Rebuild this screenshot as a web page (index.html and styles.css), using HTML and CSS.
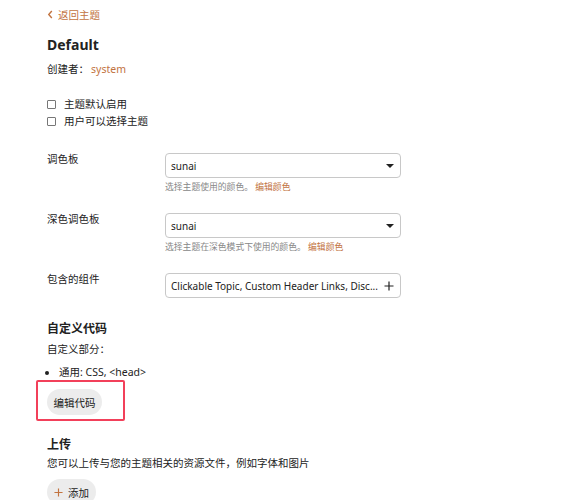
FILE: index.html
```html
<!DOCTYPE html>
<html lang="zh-CN">
<head>
    <meta charset="UTF-8">
    <meta name="viewport" content="width=device-width, initial-scale=1.0">
    <title>Default</title>
    <link rel="stylesheet" href="styles.css">
</head>
<body>
    <div class="page">
        <a class="back-link" href="#">
            <svg class="chevron" viewBox="0 0 8 10" width="7" height="9"><path d="M5.5 1 L2 5 L5.5 9" fill="none" stroke="currentColor" stroke-width="1.6"/></svg>
            返回主题
        </a>

        <h2 class="theme-title">Default</h2>
        <div class="author">创建者：<a href="#" class="link">system</a></div>

        <div class="checks">
            <label class="check"><span class="box"></span>主题默认启用</label>
            <label class="check"><span class="box"></span>用户可以选择主题</label>
        </div>

        <div class="setting">
            <div class="setting-label">调色板</div>
            <div class="setting-value">
                <div class="select">
                    <span>sunai</span>
                    <span class="caret"></span>
                </div>
                <div class="help">选择主题使用的颜色。 <a href="#" class="link">编辑颜色</a></div>
            </div>
        </div>

        <div class="setting">
            <div class="setting-label">深色调色板</div>
            <div class="setting-value">
                <div class="select">
                    <span>sunai</span>
                    <span class="caret"></span>
                </div>
                <div class="help">选择主题在深色模式下使用的颜色。 <a href="#" class="link">编辑颜色</a></div>
            </div>
        </div>

        <div class="setting">
            <div class="setting-label">包含的组件</div>
            <div class="setting-value">
                <div class="select">
                    <span class="ellipsis">Clickable Topic, Custom Header Links, Disc...</span>
                    <svg class="plus" viewBox="0 0 10 10" width="10" height="10"><path d="M5 0.5 V9.5 M0.5 5 H9.5" stroke="currentColor" stroke-width="1.2"/></svg>
                </div>
            </div>
        </div>

        <h3 class="section-title">自定义代码</h3>
        <div class="text">自定义部分：</div>
        <ul class="sections">
            <li>通用: CSS, &lt;head&gt;</li>
        </ul>
        <div class="highlight">
            <button class="btn">编辑代码</button>
        </div>

        <h3 class="section-title upload-title">上传</h3>
        <div class="text upload-text">您可以上传与您的主题相关的资源文件，例如字体和图片</div>
        <button class="btn btn-add">
            <svg class="plus accent" viewBox="0 0 10 10" width="9" height="9"><path d="M5 0.5 V9.5 M0.5 5 H9.5" stroke="currentColor" stroke-width="1.3"/></svg>
            添加
        </button>
    </div>
</body>
</html>
```

FILE: styles.css
```css
body {
    margin: 0;
    background-color: white;
    color: #222;
    font-family: "Noto Sans", "Noto Sans CJK SC", sans-serif;
    font-size: 10.5px;
}

.page {
    padding: 6px 0 0 47px;
}

.link {
    color: #c2733f;
    text-decoration: none;
}

.back-link {
    display: flex;
    align-items: center;
    gap: 4px;
    color: #c2733f;
    text-decoration: none;
    height: 17px;
}

.theme-title {
    font-size: 14px;
    font-weight: 700;
    margin: 12px 0 0;
    line-height: 20px;
}

.author {
    margin-top: 7px;
    line-height: 15px;
}

.author .link {
    margin-left: 2px;
}

.checks {
    margin-top: 19px;
}

.check {
    display: flex;
    align-items: center;
    height: 17px;
    line-height: 17px;
}

.box {
    width: 7px;
    height: 7px;
    border: 1px solid #777;
    border-radius: 1px;
    margin-right: 8px;
}

.setting {
    display: flex;
    margin-top: 23px;
}

.setting + .setting {
    margin-top: 20px;
}

.setting-label {
    width: 118px;
    line-height: 12px;
}

.setting-value {
    width: 236px;
}

.select {
    display: flex;
    align-items: center;
    justify-content: space-between;
    height: 25px;
    box-sizing: border-box;
    border: 1px solid #c8c8c8;
    border-radius: 4px;
    padding: 0 6px 0 5px;
    font-size: 10px;
    color: #222;
}

.ellipsis {
    white-space: nowrap;
    overflow: hidden;
    margin-right: 5px;
}

.caret {
    width: 0;
    height: 0;
    border-left: 4px solid transparent;
    border-right: 4px solid transparent;
    border-top: 4px solid #222;
}

.plus {
    flex-shrink: 0;
}

.help {
    font-size: 8.8px;
    color: #888;
    margin-top: 2px;
}

.section-title {
    font-size: 12px;
    font-weight: 700;
    margin: 23px 0 0;
    line-height: 16px;
}

.text {
    margin-top: 5px;
    line-height: 15px;
}

.sections {
    margin: 8px 0 0;
    padding-left: 12px;
    line-height: 15px;
}

.highlight {
    display: flex;
    width: 76px;
    border: 2px solid #f2405a;
    border-radius: 2px;
    margin: 0 0 0 -11px;
    padding: 7px 0 4px 9px;
}

.btn {
    display: flex;
    align-items: center;
    font-family: inherit;
    font-size: 10.5px;
    color: #222;
    background-color: #ececec;
    border: none;
    border-radius: 13px;
    height: 26px;
    padding: 0 6.5px;
    cursor: pointer;
}

.upload-title {
    margin-top: 16px;
}

.upload-text {
    margin-top: 3px;
}

.btn-add {
    gap: 5px;
    margin-top: 8px;
    padding: 0 7px;
}

.accent {
    color: #c2733f;
}
```
